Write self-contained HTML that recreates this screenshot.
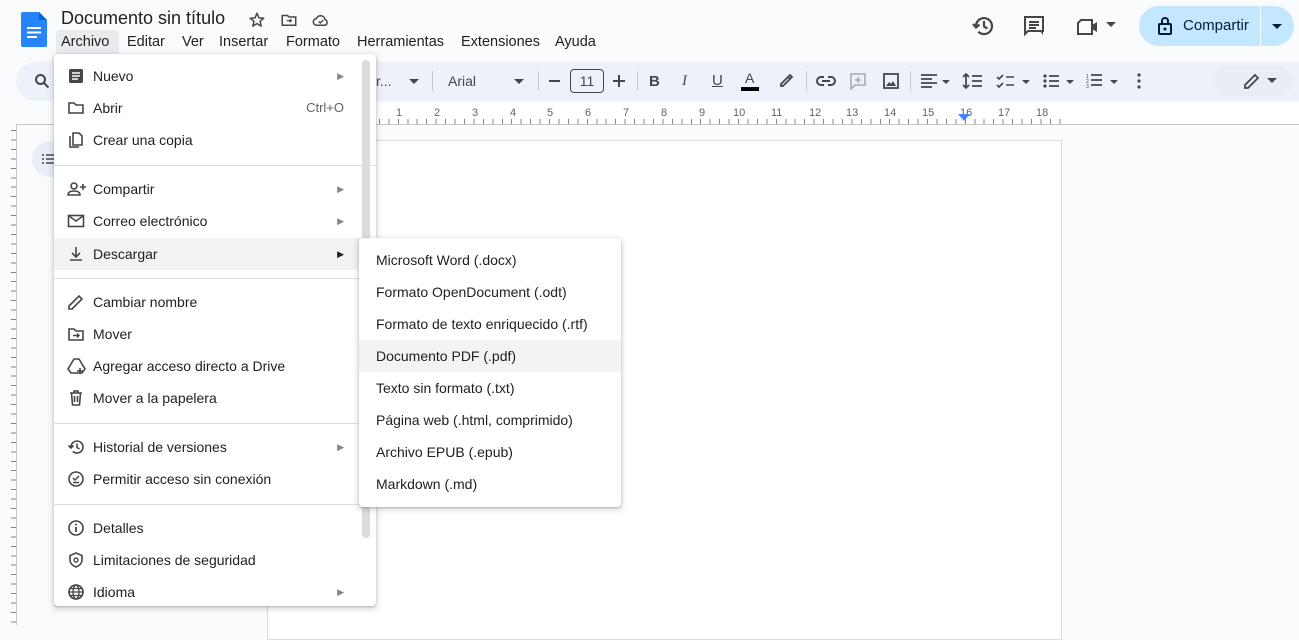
<!DOCTYPE html>
<html><head><meta charset="utf-8"><style>
*{margin:0;padding:0;box-sizing:border-box}
body{width:1299px;height:624px;overflow:hidden;background:#f9fbfd;font-family:"Liberation Sans",Arial,sans-serif;color:#202124;position:relative}
.a{position:absolute}
.t{font-size:14px;white-space:nowrap}
.menu{position:absolute;background:#fff;border-radius:4px;box-shadow:0 2px 6px 2px rgba(60,64,67,.15),0 1px 2px rgba(60,64,67,.3)}
.it{position:absolute;left:0;right:0;height:32px;font-size:14px;line-height:32px;color:#202124}
.it .l{position:absolute;left:39px}
.it .ar{position:absolute;right:32px;top:0;font-size:9px;color:#80868b}
.it svg{position:absolute;left:13px;top:7px}
.sep{position:absolute;left:0;right:0;height:1px;background:#dadce0}
.sub .it .l{left:17px}
.rn{position:absolute;top:107px;font-size:11px;color:#5f6368;font-family:"Liberation Sans",sans-serif}
</style></head><body>
<!-- header -->
<svg class="a" style="left:21px;top:12px" width="26" height="35" viewBox="0 0 26 35"><path d="M2 0h16l8 8v25a2 2 0 0 1-2 2H2a2 2 0 0 1-2-2V2a2 2 0 0 1 2-2z" fill="#2684fc"/><path d="M18 0l8 8h-8z" fill="#0066da"/><rect x="6" y="15" width="14" height="2" fill="#fff"/><rect x="6" y="19.5" width="14" height="2" fill="#fff"/><rect x="6" y="24" width="10" height="2" fill="#fff"/></svg>
<div class="a" style="left:61px;top:8px;font-size:18px;color:#1f1f1f">Documento sin título</div>
<svg class="a" style="left:248px;top:11px" width="18" height="18" viewBox="0 0 24 24"><path d="M12 3l2.6 6.1 6.4.5-4.9 4.2 1.5 6.4L12 16.8 6.4 20.2l1.5-6.4L3 9.6l6.4-.5z" fill="none" stroke="#444746" stroke-width="2" stroke-linejoin="round"/></svg>
<svg class="a" style="left:280px;top:11px" width="18" height="18" viewBox="0 0 24 24"><path d="M3 6h7l2 2h9v11H3z" fill="none" stroke="#444746" stroke-width="2"/><path d="M9 13h6m-2-2l2 2-2 2" stroke="#444746" stroke-width="1.8" fill="none"/></svg>
<svg class="a" style="left:311px;top:11px" width="20" height="18" viewBox="0 0 24 24"><path d="M6.5 19a4.5 4.5 0 0 1-.5-9 6 6 0 0 1 11.5 1.5A4 4 0 0 1 17.5 19z" fill="none" stroke="#444746" stroke-width="2"/><path d="M9 14l2 2 4-4" fill="none" stroke="#444746" stroke-width="1.8"/></svg>
<div class="a" style="left:56px;top:30px;width:63px;height:24px;background:#e9ebee;border-radius:4px 4px 0 0"></div>
<div class="a t" style="left:61px;top:34px;color:#1f1f1f;font-size:14.5px">Archivo</div>
<div class="a t" style="left:127px;top:34px;font-size:14.5px">Editar</div>
<div class="a t" style="left:182px;top:34px;font-size:14.5px">Ver</div>
<div class="a t" style="left:219px;top:34px;font-size:14.5px">Insertar</div>
<div class="a t" style="left:286px;top:34px;font-size:14.5px">Formato</div>
<div class="a t" style="left:357px;top:34px;font-size:14.5px">Herramientas</div>
<div class="a t" style="left:461px;top:34px;font-size:14.5px">Extensiones</div>
<div class="a t" style="left:555px;top:34px;font-size:14.5px">Ayuda</div>
<svg class="a" style="left:972px;top:14px" width="24" height="24" viewBox="0 0 24 24"><path d="M4 12a8 8 0 1 1 2.3 5.7" fill="none" stroke="#444746" stroke-width="2.2"/><path d="M1 10l3 3.5 3.5-3" fill="none" stroke="#444746" stroke-width="2.2"/><path d="M12 7v5.5l3.5 2" fill="none" stroke="#444746" stroke-width="2.2"/></svg>
<svg class="a" style="left:1022px;top:14px" width="24" height="24" viewBox="0 0 24 24"><path d="M3 3h18v14H6l-3 3z" fill="none" stroke="#444746" stroke-width="2"/><path d="M7 8h10M7 11h10M7 14h7" stroke="#444746" stroke-width="2"/><path d="M18 17h3v4z" fill="#444746"/></svg>
<svg class="a" style="left:1076px;top:16px" width="26" height="22" viewBox="0 0 26 22"><path d="M5 4h11v14H2V7z" fill="none" stroke="#444746" stroke-width="2"/><path d="M16 9l5-3v10l-5-3z" fill="#444746"/></svg>
<svg class="a" style="left:1106px;top:22px" width="10" height="6"><path d="M0 0h10L5 5z" fill="#444746"/></svg>
<div class="a" style="left:1139px;top:6px;width:155px;height:40px;background:#c2e7ff;border-radius:20px"></div>
<div class="a" style="left:1260px;top:6px;width:1px;height:40px;background:#f9fbfd"></div>
<svg class="a" style="left:1157px;top:16px" width="16" height="20" viewBox="0 0 16 20"><rect x="2" y="8" width="12" height="10" rx="1" fill="none" stroke="#001d35" stroke-width="2"/><path d="M5 8V5a3 3 0 0 1 6 0v3" fill="none" stroke="#001d35" stroke-width="2"/><circle cx="8" cy="13" r="1.5" fill="#001d35"/></svg>
<div class="a t" style="left:1183px;top:17px;font-size:15px;color:#001d35">Compartir</div>
<svg class="a" style="left:1272px;top:24px" width="10" height="6"><path d="M0 0h10L5 5z" fill="#001d35"/></svg>
<!-- toolbar -->
<div class="a" style="left:16px;top:62px;width:1300px;height:39px;background:#edf2fa;border-radius:20px 0 0 20px"></div>
<svg class="a" style="left:34px;top:73px" width="16" height="16" viewBox="0 0 16 16"><circle cx="6.5" cy="6.5" r="4.5" fill="none" stroke="#444746" stroke-width="2"/><path d="M10 10l4.5 4.5" stroke="#444746" stroke-width="2"/></svg>
<div class="a" style="left:1213px;top:65px;width:80px;height:32px;background:#e9eef6;border-radius:16px"></div>
<div class="a t" style="left:376px;top:73px;color:#444746">r...</div>
<svg class="a" style="left:409px;top:79px" width="10" height="5"><path d="M0 0h10L5 5z" fill="#444746"/></svg>
<div class="a" style="left:432px;top:71px;width:1px;height:20px;background:#c7c7c7"></div>
<div class="a t" style="left:448px;top:73px;color:#444746">Arial</div>
<svg class="a" style="left:514px;top:79px" width="10" height="5"><path d="M0 0h10L5 5z" fill="#444746"/></svg>
<div class="a" style="left:538px;top:71px;width:1px;height:20px;background:#c7c7c7"></div>
<div class="a" style="left:549px;top:80px;width:11px;height:2px;background:#444746"></div>
<div class="a" style="left:570px;top:69px;width:34px;height:24px;border:1px solid #444746;border-radius:4px;font-size:14px;text-align:center;line-height:22px;color:#444746">11</div>
<div class="a" style="left:613px;top:80px;width:12px;height:2px;background:#444746"></div>
<div class="a" style="left:618px;top:75px;width:2px;height:12px;background:#444746"></div>
<div class="a" style="left:637px;top:71px;width:1px;height:20px;background:#c7c7c7"></div>
<div class="a" style="left:649px;top:73px;font-size:15px;font-weight:bold;color:#444746">B</div>
<div class="a" style="left:682px;top:73px;font-size:15px;font-style:italic;font-family:'Liberation Serif',serif;color:#444746">I</div>
<div class="a" style="left:712px;top:72px;font-size:15px;text-decoration:underline;color:#444746">U</div>
<div class="a" style="left:745px;top:70px;font-size:14px;color:#444746">A</div>
<div class="a" style="left:741px;top:87px;width:18px;height:4px;background:#000"></div>
<svg class="a" style="left:778px;top:72px" width="16" height="16" viewBox="0 0 16 16"><path d="M3 12l7-7 2 2-7 7H3z M10 5l2-2 2 2-2 2" fill="none" stroke="#444746" stroke-width="1.8"/></svg>
<div class="a" style="left:806px;top:71px;width:1px;height:20px;background:#c7c7c7"></div>
<svg class="a" style="left:816px;top:73px" width="20" height="16" viewBox="0 0 20 16"><path d="M8 4H5a4 4 0 0 0 0 8h3M12 4h3a4 4 0 0 1 0 8h-3M6 8h8" fill="none" stroke="#444746" stroke-width="2"/></svg>
<svg class="a" style="left:849px;top:72px" width="18" height="18" viewBox="0 0 18 18"><path d="M2 2h14v11H6l-4 4z" fill="none" stroke="#a8abb0" stroke-width="1.6"/><path d="M9 5v6M6 8h6" stroke="#a8abb0" stroke-width="1.6"/></svg>
<svg class="a" style="left:882px;top:72px" width="18" height="18" viewBox="0 0 18 18"><rect x="2" y="2" width="14" height="14" fill="none" stroke="#444746" stroke-width="1.8"/><path d="M4 14l3-4 2 2 2-3 3 5z" fill="#444746"/></svg>
<div class="a" style="left:910px;top:71px;width:1px;height:20px;background:#c7c7c7"></div>
<svg class="a" style="left:920px;top:73px" width="40" height="16" viewBox="0 0 40 16"><path d="M1 2h16M1 6h11M1 10h16M1 14h11" stroke="#444746" stroke-width="1.8"/><path d="M22 7h8l-4 4z" fill="#444746"/></svg>
<svg class="a" style="left:962px;top:72px" width="22" height="18" viewBox="0 0 22 18"><path d="M4 2v14M1 5l3-3 3 3M1 13l3 3 3-3M10 4h10M10 9h10M10 14h10" fill="none" stroke="#444746" stroke-width="1.8"/></svg>
<svg class="a" style="left:996px;top:73px" width="40" height="16" viewBox="0 0 40 16"><path d="M1 4l2 2 4-4M1 12l2 2 4-4M10 4h8M10 12h8" fill="none" stroke="#444746" stroke-width="1.6"/><path d="M26 7h8l-4 4z" fill="#444746"/></svg>
<svg class="a" style="left:1042px;top:73px" width="40" height="16" viewBox="0 0 40 16"><circle cx="3" cy="3" r="1.6" fill="#444746"/><circle cx="3" cy="8" r="1.6" fill="#444746"/><circle cx="3" cy="13" r="1.6" fill="#444746"/><path d="M7 3h10M7 8h10M7 13h10" stroke="#444746" stroke-width="1.8"/><path d="M24 7h8l-4 4z" fill="#444746"/></svg>
<svg class="a" style="left:1086px;top:72px" width="40" height="18" viewBox="0 0 40 18"><text x="0" y="6" font-size="5" fill="#444746">1</text><text x="0" y="11" font-size="5" fill="#444746">2</text><text x="0" y="16" font-size="5" fill="#444746">3</text><path d="M5 3h11M5 8h11M5 13h11" stroke="#444746" stroke-width="1.8"/><path d="M24 8h8l-4 4z" fill="#444746"/></svg>
<svg class="a" style="left:1136px;top:73px" width="6" height="16"><circle cx="3" cy="2" r="1.6" fill="#444746"/><circle cx="3" cy="8" r="1.6" fill="#444746"/><circle cx="3" cy="14" r="1.6" fill="#444746"/></svg>
<svg class="a" style="left:1243px;top:72px" width="18" height="18" viewBox="0 0 18 18"><path d="M2 16v-3L12 3l3 3L5 16z" fill="none" stroke="#444746" stroke-width="1.8"/></svg>
<svg class="a" style="left:1267px;top:78px" width="10" height="5"><path d="M0 0h10L5 5z" fill="#444746"/></svg>
<!-- ruler -->
<div class="a" style="left:267px;top:103px;width:1032px;height:22px;background:#fff"></div>
<div class="a" style="left:360px;top:119px;width:702px;height:5px;background:repeating-linear-gradient(90deg,#80868b 0 1px,transparent 1px 9.45px)"></div>
<div class="a" style="left:16px;top:124px;width:1283px;height:1px;background:#c7c7c7"></div>
<div class="rn" style="left:396px">1</div><div class="rn" style="left:434px">2</div><div class="rn" style="left:472px">3</div><div class="rn" style="left:510px">4</div><div class="rn" style="left:547px">5</div><div class="rn" style="left:585px">6</div><div class="rn" style="left:623px">7</div><div class="rn" style="left:661px">8</div><div class="rn" style="left:699px">9</div><div class="rn" style="left:733px">10</div><div class="rn" style="left:771px">11</div><div class="rn" style="left:809px">12</div><div class="rn" style="left:846px">13</div><div class="rn" style="left:884px">14</div><div class="rn" style="left:922px">15</div><div class="rn" style="left:960px">16</div><div class="rn" style="left:998px">17</div><div class="rn" style="left:1036px">18</div>
<svg class="a" style="left:958px;top:114px" width="12" height="8"><path d="M0 0h12L6 7z" fill="#4285f4"/></svg>
<!-- page -->
<div class="a" style="left:267px;top:140px;width:795px;height:500px;background:#fff;border:1px solid #dadce0"></div>
<!-- vertical ruler -->
<div class="a" style="left:16px;top:125px;width:1px;height:500px;background:#c7c7c7"></div>
<div class="a" style="left:11px;top:130px;width:5px;height:494px;background:repeating-linear-gradient(180deg,#80868b 0 1px,transparent 1px 9.45px)"></div>
<div class="a" style="left:32px;top:141px;width:40px;height:36px;background:#e9eef6;border-radius:18px"></div>
<svg class="a" style="left:42px;top:154px" width="12" height="10"><path d="M0 1h2M4 1h8M0 5h2M4 5h8M0 9h2M4 9h8" stroke="#444746" stroke-width="1.6"/></svg>
<!-- main menu -->
<div class="menu" style="left:54px;top:54px;width:322px;height:552px">
<div class="a" style="left:308px;top:6px;width:8px;height:478px;background:#dadce0;border-radius:4px"></div>
<div class="it" style="top:6px"><svg width="18" height="18" viewBox="0 0 18 18"><rect x="2" y="2" width="14" height="14" rx="1.5" fill="#444746"/><path d="M5 6h8M5 9h8M5 12h6" stroke="#fff" stroke-width="1.5"/></svg><span class="l">Nuevo</span><span class="ar">▶</span></div>
<div class="it" style="top:38px"><svg width="18" height="18" viewBox="0 0 18 18"><path d="M2 4h5l2 2h7v8H2z" fill="none" stroke="#444746" stroke-width="1.6"/></svg><span class="l">Abrir</span><span class="ar" style="font-size:13px;right:32px;color:#5f6368">Ctrl+O</span></div>
<div class="it" style="top:70px"><svg width="18" height="18" viewBox="0 0 18 18"><path d="M3 5v11h9" fill="none" stroke="#444746" stroke-width="1.6"/><path d="M6 2h6l3 3v9H6z" fill="none" stroke="#444746" stroke-width="1.6"/></svg><span class="l">Crear una copia</span></div>
<div class="sep" style="top:111px"></div>
<div class="it" style="top:119px"><svg width="20" height="18" viewBox="0 0 20 18"><circle cx="7" cy="6" r="3" fill="none" stroke="#444746" stroke-width="1.6"/><path d="M1 15c0-3 3-4 6-4s6 1 6 4z" fill="none" stroke="#444746" stroke-width="1.6"/><path d="M16 4v6M13 7h6" stroke="#444746" stroke-width="1.6"/></svg><span class="l">Compartir</span><span class="ar">▶</span></div>
<div class="it" style="top:151px"><svg width="18" height="18" viewBox="0 0 18 18"><rect x="1.5" y="3.5" width="15" height="11" fill="none" stroke="#444746" stroke-width="1.6"/><path d="M2 4l7 5 7-5" fill="none" stroke="#444746" stroke-width="1.6"/></svg><span class="l">Correo electrónico</span><span class="ar">▶</span></div>
<div class="it" style="top:184px;background:#f1f3f4;height:32px"><svg width="18" height="18" viewBox="0 0 18 18"><path d="M9 2v9M5 8l4 4 4-4M3 15h12" fill="none" stroke="#444746" stroke-width="1.6"/></svg><span class="l">Descargar</span><span class="ar" style="color:#202124">▶</span></div>
<div class="sep" style="top:224px"></div>
<div class="it" style="top:232px"><svg width="18" height="18" viewBox="0 0 18 18"><path d="M2 16v-3L12 3l3 3L5 16z" fill="none" stroke="#444746" stroke-width="1.6"/></svg><span class="l">Cambiar nombre</span></div>
<div class="it" style="top:264px"><svg width="18" height="18" viewBox="0 0 18 18"><path d="M2 4h5l2 2h7v9H2z" fill="none" stroke="#444746" stroke-width="1.6"/><path d="M6 10.5h6M10 8.5l2 2-2 2" fill="none" stroke="#444746" stroke-width="1.4"/></svg><span class="l">Mover</span></div>
<div class="it" style="top:296px"><svg width="20" height="18" viewBox="0 0 20 18"><path d="M7 2h5l6 10-3 4H4l-3-4z" fill="none" stroke="#444746" stroke-width="1.6"/><path d="M13 11v6M10 14h6" stroke="#444746" stroke-width="1.6"/></svg><span class="l">Agregar acceso directo a Drive</span></div>
<div class="it" style="top:328px"><svg width="18" height="18" viewBox="0 0 18 18"><path d="M3 4h12M7 4V2h4v2M4.5 4l1 12h7l1-12M7.5 7v6M10.5 7v6" fill="none" stroke="#444746" stroke-width="1.6"/></svg><span class="l">Mover a la papelera</span></div>
<div class="sep" style="top:369px"></div>
<div class="it" style="top:377px"><svg width="18" height="18" viewBox="0 0 18 18"><path d="M4 9a6 6 0 1 1 1.8 4.3" fill="none" stroke="#444746" stroke-width="1.6"/><path d="M1.5 7.5l2.5 2.5 2.5-2.5" fill="none" stroke="#444746" stroke-width="1.6"/><path d="M10 5.5v4l2.5 1.5" fill="none" stroke="#444746" stroke-width="1.6"/></svg><span class="l">Historial de versiones</span><span class="ar">▶</span></div>
<div class="it" style="top:409px"><svg width="18" height="18" viewBox="0 0 18 18"><circle cx="9" cy="9" r="7" fill="none" stroke="#444746" stroke-width="1.6"/><path d="M6 8l2 2 4-4M6 12.5h6" fill="none" stroke="#444746" stroke-width="1.5"/></svg><span class="l">Permitir acceso sin conexión</span></div>
<div class="sep" style="top:450px"></div>
<div class="it" style="top:458px"><svg width="18" height="18" viewBox="0 0 18 18"><circle cx="9" cy="9" r="7" fill="none" stroke="#444746" stroke-width="1.6"/><path d="M9 8v5" stroke="#444746" stroke-width="1.8"/><circle cx="9" cy="5.5" r="1" fill="#444746"/></svg><span class="l">Detalles</span></div>
<div class="it" style="top:490px"><svg width="18" height="18" viewBox="0 0 18 18"><path d="M9 2l6 2.5v4c0 4-3 6.5-6 7.5-3-1-6-3.5-6-7.5v-4z" fill="none" stroke="#444746" stroke-width="1.6"/><circle cx="9" cy="9" r="2" fill="none" stroke="#444746" stroke-width="1.4"/></svg><span class="l">Limitaciones de seguridad</span></div>
<div class="it" style="top:522px"><svg width="18" height="18" viewBox="0 0 18 18"><circle cx="9" cy="9" r="7" fill="none" stroke="#444746" stroke-width="1.6"/><ellipse cx="9" cy="9" rx="3" ry="7" fill="none" stroke="#444746" stroke-width="1.4"/><path d="M2 9h14M3 5.5h12M3 12.5h12" stroke="#444746" stroke-width="1.2"/></svg><span class="l">Idioma</span><span class="ar">▶</span></div>
</div>
<!-- submenu -->
<div class="menu sub" style="left:359px;top:238px;width:262px;height:269px">
<div class="it" style="top:6px"><span class="l">Microsoft Word (.docx)</span></div>
<div class="it" style="top:38px"><span class="l">Formato OpenDocument (.odt)</span></div>
<div class="it" style="top:70px"><span class="l">Formato de texto enriquecido (.rtf)</span></div>
<div class="it" style="top:102px;background:#f1f3f4"><span class="l">Documento PDF (.pdf)</span></div>
<div class="it" style="top:134px"><span class="l">Texto sin formato (.txt)</span></div>
<div class="it" style="top:166px"><span class="l">Página web (.html, comprimido)</span></div>
<div class="it" style="top:198px"><span class="l">Archivo EPUB (.epub)</span></div>
<div class="it" style="top:230px"><span class="l">Markdown (.md)</span></div>
</div>
</body></html>
